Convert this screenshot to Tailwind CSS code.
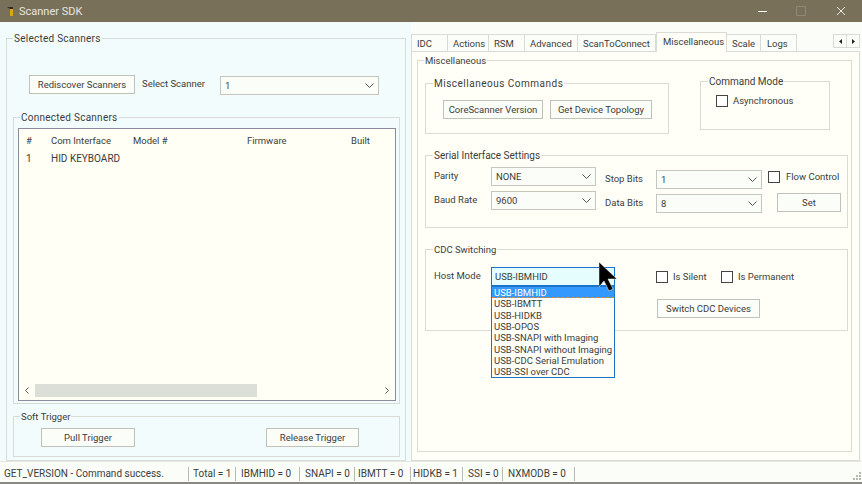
<!DOCTYPE html>
<html lang="en">
<head>
  <meta charset="UTF-8">
  <title>Scanner SDK</title>
  <script src="https://cdn.jsdelivr.net/npm/@tailwindcss/browser@4"></script>
</head>
<body class="w-[862px] h-[484px] overflow-hidden bg-[#fbfef8] font-['Roboto',sans-serif] text-[9.5px] leading-[13px] text-[#3c3c3a] whitespace-nowrap">
<div class="relative w-[862px] h-[484px] flex flex-col">

  <!-- title bar -->
  <div class="h-[22px] shrink-0 bg-[#787059] flex items-center text-[11px] text-[#e6e6e0]">
    <svg class="ml-[7px] w-[8px] h-[12px]" viewBox="0 0 8 12"><path d="M0 2h6v2H3z" fill="#2e2e28"/><path d="M3 4h3v7H3z" fill="#d9a520"/></svg>
    <span class="ml-[4px]">Scanner SDK</span>
    <svg class="ml-auto mr-[16px] w-[90px] h-[12px]" viewBox="0 0 90 12" fill="none">
      <path d="M2 6.500h9" stroke="#fff"/>
      <path d="M40.500 1.500h9v9h-9z" stroke="#8f8976"/>
      <path d="M81 2l8 8M89 2l-8 8" stroke="#e8e8e2"/>
    </svg>
  </div>

  <div class="flex h-[439px] shrink-0">
    <!-- left side -->
    <div class="w-[411px] shrink-0 bg-[#f2fcfd]">
      <fieldset class="ml-[6px] mt-[10px] w-[400px] h-[429px] border border-[#d8dcd4]">
        <legend class="ml-[6px] px-[1px] pt-[1px] h-[12px] leading-[12px] text-[10px] tracking-[0.25px]">Selected Scanners</legend>
        <div class="flex items-start mt-[31px] ml-[22px] h-[19px]">
          <button class="w-[106px] h-[19px] bg-[#fbfdf8] border border-[#bfc2b9]">Rediscover Scanners</button>
          <span class="ml-[7px] mt-[2px] w-[78px]">Select Scanner</span>
          <div class="w-[159px] h-[19px] mt-[1px] bg-[#fbfdf8] border border-[#c4c7be] flex items-center justify-between pl-[4px] pr-[4px]">
            <span>1</span>
            <svg class="w-[9px] h-[5px]" viewBox="0 0 9 5" fill="none"><path d="M.5.500l4 4 4-4" stroke="#555"/></svg>
          </div>
        </div>

        <fieldset class="ml-[6px] mt-[17px] w-[387px] h-[293px] border border-[#d8dcd4]">
          <legend class="ml-[6px] px-[1px] pt-[1px] h-[12px] leading-[12px] text-[10px] tracking-[0.25px]">Connected Scanners</legend>
          <div class="ml-[4px] mt-[5px] w-[378px] h-[273px] bg-[#fffff5] border border-[#8b8d9c] flex flex-col">
            <div class="flex mt-[5px] h-[13px] pl-[7px]">
              <span class="w-[25px]">#</span><span class="w-[82px]">Com Interface</span><span class="w-[114px]">Model #</span><span class="w-[104px]">Firmware</span><span>Built</span>
            </div>
            <div class="flex mt-[5px] h-[13px] pl-[7px] text-[10px]">
              <span class="w-[25px]">1</span><span>HID KEYBOARD</span>
            </div>
            <div class="mt-auto mb-[3px] h-[13px] flex items-center">
              <svg class="ml-[6px] w-[4px] h-[7px]" viewBox="0 0 4 7" fill="none"><path d="M3.500.500l-3 3 3 3" stroke="#555"/></svg>
              <div class="ml-[6px] w-[222px] h-[13px] bg-[#dcdfd8]"></div>
              <svg class="ml-auto mr-[6px] w-[4px] h-[7px]" viewBox="0 0 4 7" fill="none"><path d="M.5.500l3 3-3 3" stroke="#555"/></svg>
            </div>
          </div>
        </fieldset>

        <fieldset class="ml-[6px] mt-[6px] w-[387px] h-[47px] border border-[#d8dcd4]">
          <legend class="ml-[6px] px-[1px] pt-[1px] h-[12px] leading-[12px]">Soft Trigger</legend>
          <div class="flex mt-[6px] ml-[27px]">
            <button class="w-[94px] h-[19px] bg-[#fbfdf8] border border-[#bfc2b9]">Pull Trigger</button>
            <button class="ml-[131px] w-[93px] h-[19px] bg-[#fbfdf8] border border-[#bfc2b9]">Release Trigger</button>
          </div>
        </fieldset>
      </fieldset>
    </div>

    <!-- right side, tabs -->
    <div class="w-[449px] shrink-0 pt-[12px]">
      <div class="relative z-10 flex items-end h-[17px] bg-[#fbfef8]">
        <div class="w-[37px] h-[17px] pt-[2px] pl-[5px] border border-b-0 border-[#d8dcd4]">IDC</div>
        <div class="w-[41px] h-[17px] pt-[2px] pl-[5px] border border-b-0 border-l-0 border-[#d8dcd4]">Actions</div>
        <div class="w-[36px] h-[17px] pt-[2px] pl-[5px] border border-b-0 border-l-0 border-[#d8dcd4]">RSM</div>
        <div class="w-[53px] h-[17px] pt-[2px] pl-[5px] border border-b-0 border-l-0 border-[#d8dcd4]">Advanced</div>
        <div class="w-[78px] h-[17px] pt-[2px] pl-[5px] border border-b-0 border-l-0 border-[#d8dcd4]">ScanToConnect</div>
        <div class="w-[71px] h-[20px] -mb-[1px] pt-[2px] pl-[6px] bg-[#fffff8] border border-b-0 border-[#d8dcd4]">Miscellaneous</div>
        <div class="w-[34px] h-[17px] pt-[2px] pl-[5px] border border-b-0 border-l-0 border-[#d8dcd4]">Scale</div>
        <div class="w-[36px] h-[17px] pt-[2px] pl-[6px] border border-b-0 border-l-0 border-[#d8dcd4]">Logs</div>
        <div class="ml-auto mb-[3px] flex">
          <div class="w-[14px] h-[14px] border border-[#d8dcd4] flex items-center justify-center"><svg class="w-[3px] h-[5px]" viewBox="0 0 3 5"><path d="M3 0v5L0 2.500z" fill="#222"/></svg></div>
          <div class="w-[13px] h-[14px] border border-l-0 border-[#d8dcd4] flex items-center justify-center"><svg class="w-[3px] h-[5px]" viewBox="0 0 3 5"><path d="M0 0v5l3-2.500z" fill="#222"/></svg></div>
        </div>
      </div>

      <div class="h-[410px] bg-[#fffff8] border border-[#d8dcd4]">
        <fieldset class="ml-[5px] mt-[2px] w-[435px] h-[398px] border border-[#d8dcd4]">
          <legend class="ml-[6px] px-[1px] pt-[1px] h-[12px] leading-[12px]">Miscellaneous</legend>

          <div class="flex items-start mt-[9px] ml-[7px]">
            <fieldset class="mt-[2px] w-[244px] h-[57px] border border-[#d8dcd4]">
              <legend class="ml-[7px] px-[1px] pt-[1px] h-[12px] leading-[12px] text-[10px] tracking-[0.5px]">Miscellaneous Commands</legend>
              <div class="flex mt-[11px] ml-[17px]">
                <button class="w-[100px] h-[19px] bg-[#fbfdf8] border border-[#bfc2b9]">CoreScanner Version</button>
                <button class="ml-[7px] w-[102px] h-[19px] bg-[#fbfdf8] border border-[#bfc2b9]">Get Device Topology</button>
              </div>
            </fieldset>
            <fieldset class="ml-[31px] w-[130px] h-[55px] border border-[#d8dcd4]">
              <legend class="ml-[7px] px-[1px] pt-[1px] h-[12px] leading-[12px] text-[10px]">Command Mode</legend>
              <div class="flex items-center mt-[7px] ml-[15px]">
                <span class="w-[12px] h-[12px] bg-white border border-[#444]"></span>
                <span class="ml-[5px]">Asynchronous</span>
              </div>
            </fieldset>
          </div>

          <fieldset class="ml-[7px] mt-[15px] w-[423px] h-[79px] border border-[#d8dcd4]">
            <legend class="ml-[7px] px-[1px] pt-[1px] h-[12px] leading-[12px] text-[10px]">Serial Interface Settings</legend>
            <div class="flex items-start ml-[8px]">
              <div class="mt-[6px] w-[162px]">
                <div class="flex items-start h-[19px]">
                  <span class="w-[57px] mt-[2px]">Parity</span>
                  <div class="w-[105px] h-[19px] bg-[#fbfdf8] border border-[#c4c7be] flex items-center justify-between px-[4px]"><span>NONE</span><svg class="w-[9px] h-[5px]" viewBox="0 0 9 5" fill="none"><path d="M.5.500l4 4 4-4" stroke="#555"/></svg></div>
                </div>
                <div class="flex items-start h-[19px] mt-[5px]">
                  <span class="w-[57px] mt-[2px]">Baud Rate</span>
                  <div class="w-[105px] h-[19px] bg-[#fbfdf8] border border-[#c4c7be] flex items-center justify-between px-[4px]"><span>9600</span><svg class="w-[9px] h-[5px]" viewBox="0 0 9 5" fill="none"><path d="M.5.500l4 4 4-4" stroke="#555"/></svg></div>
                </div>
              </div>
              <div class="mt-[9px] ml-[9px] w-[157px]">
                <div class="flex items-start h-[19px]">
                  <span class="w-[51px] mt-[2px]">Stop Bits</span>
                  <div class="w-[106px] h-[19px] bg-[#fbfdf8] border border-[#c4c7be] flex items-center justify-between px-[4px]"><span>1</span><svg class="w-[9px] h-[5px]" viewBox="0 0 9 5" fill="none"><path d="M.5.500l4 4 4-4" stroke="#555"/></svg></div>
                </div>
                <div class="flex items-start h-[19px] mt-[5px]">
                  <span class="w-[51px] mt-[2px]">Data Bits</span>
                  <div class="w-[106px] h-[19px] bg-[#fbfdf8] border border-[#c4c7be] flex items-center justify-between px-[4px]"><span>8</span><svg class="w-[9px] h-[5px]" viewBox="0 0 9 5" fill="none"><path d="M.5.500l4 4 4-4" stroke="#555"/></svg></div>
                </div>
              </div>
              <div class="mt-[9px] ml-[6px]">
                <div class="flex items-center">
                  <span class="w-[12px] h-[12px] bg-white border border-[#444]"></span>
                  <span class="ml-[6px]">Flow Control</span>
                </div>
                <button class="block mt-[10px] ml-[9px] w-[64px] h-[19px] bg-[#fbfdf8] border border-[#bfc2b9]">Set</button>
              </div>
            </div>
          </fieldset>

          <fieldset class="ml-[7px] mt-[15px] w-[423px] h-[88px] border border-[#d8dcd4]">
            <legend class="ml-[7px] px-[1px] pt-[1px] h-[12px] leading-[12px]">CDC Switching</legend>
            <div class="flex items-start ml-[8px]">
              <span class="w-[57px] mt-[14px]">Host Mode</span>
              <div class="relative mt-[12px] w-[124px] h-[19px] bg-[#e6fdfd] border border-[#1c74c8] flex items-center px-[3px]">
                <span>USB-IBMHID</span>
                <ul class="absolute z-20 left-[-1px] top-[18px] w-[124px] h-[92px] bg-[#fffff8] border border-[#1c74c8] leading-[11.330px] text-[#3c3c3a]">
                  <li class="h-[11.330px] pl-[2px] bg-[#3399ff] text-white border-b border-dashed border-[#e08a30]">USB-IBMHID</li>
                  <li class="h-[11.330px] pl-[2px]">USB-IBMTT</li>
                  <li class="h-[11.330px] pl-[2px]">USB-HIDKB</li>
                  <li class="h-[11.330px] pl-[2px]">USB-OPOS</li>
                  <li class="h-[11.330px] pl-[2px]">USB-SNAPI with Imaging</li>
                  <li class="h-[11.330px] pl-[2px]">USB-SNAPI without Imaging</li>
                  <li class="h-[11.330px] pl-[2px]">USB-CDC Serial Emulation</li>
                  <li class="h-[11.330px] pl-[2px]">USB-SSI over CDC</li>
                </ul>
              </div>
              <div class="ml-[41px] mt-[15px]">
                <div class="flex items-center">
                  <span class="w-[12px] h-[12px] bg-white border border-[#444]"></span>
                  <span class="ml-[5px] w-[48px]">Is Silent</span>
                  <span class="w-[12px] h-[12px] bg-white border border-[#444]"></span>
                  <span class="ml-[5px]">Is Permanent</span>
                </div>
                <button class="block mt-[16px] ml-[1px] w-[103px] h-[19px] bg-[#fbfdf8] border border-[#bfc2b9]">Switch CDC Devices</button>
              </div>
            </div>
          </fieldset>
        </fieldset>
      </div>
    </div>
  </div>

  <!-- status bar -->
  <div class="relative flex-1 flex items-center pt-[4px] text-[10px] bg-[#fbfef8] border-t border-[#e6e8e0] border-b-2 border-b-[#8a8a82]">
    <span class="w-[189px] pl-[4px] border-r border-[#b9bbb3] h-[14px]">GET_VERSION - Command success.</span>
    <span class="w-[47px] pl-[4px] border-r border-[#b9bbb3] h-[14px]">Total = 1</span>
    <span class="w-[64px] pl-[5px] border-r border-[#b9bbb3] h-[14px]">IBMHID = 0</span>
    <span class="w-[55px] pl-[5px] border-r border-[#b9bbb3] h-[14px]">SNAPI = 0</span>
    <span class="w-[56px] pl-[3px] border-r border-[#b9bbb3] h-[14px]">IBMTT = 0</span>
    <span class="w-[52px] pl-[2px] border-r border-[#b9bbb3] h-[14px]">HIDKB = 1</span>
    <span class="w-[40px] pl-[5px] border-r border-[#b9bbb3] h-[14px]">SSI = 0</span>
    <span class="w-[72px] pl-[5px] border-r border-[#b9bbb3] h-[14px]">NXMODB = 0</span>
    <svg class="absolute right-[1px] bottom-[1px] w-[9px] h-[9px]" viewBox="0 0 9 9" fill="#b5b7af"><path d="M7 0h2v2H7zM4 3h2v2H4zM7 3h2v2H7zM1 6h2v2H1zM4 6h2v2H4zM7 6h2v2H7z"/></svg>
  </div>

  <!-- mouse pointer -->
  <svg class="absolute z-30 left-[599px] top-[262px] w-[19px] h-[30px]" viewBox="0 0 19 30"><path d="M0 0v25l5-6 5 10 4-2-5-10h9z" fill="#000" stroke="#fff" stroke-width=".5"/></svg>
</div>
</body>
</html>
